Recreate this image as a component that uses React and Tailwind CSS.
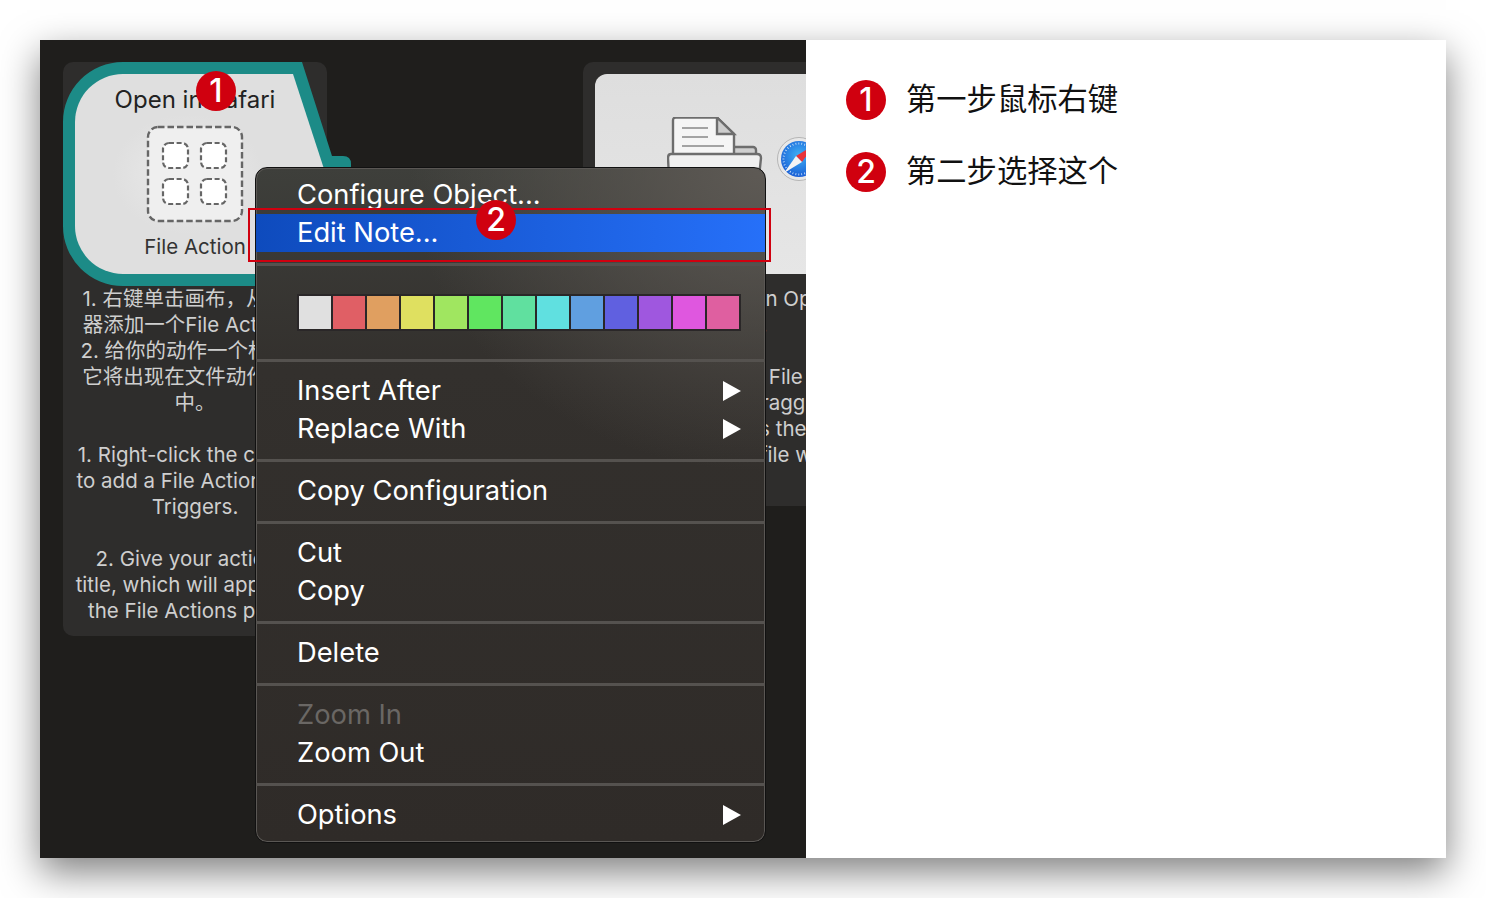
import React from "react";

const leftLines = [
  "1. 右键单击画布，从触发",
  "器添加一个File Action。",
  "2. 给你的动作一个标题，",
  "它将出现在文件动作面板",
  "中。",
  "\u00a0",
  "1. Right-click the canvas",
  "to add a File Action from",
  "Triggers.",
  "\u00a0",
  "2. Give your action a",
  "title, which will appear in",
  "the File Actions panel.",
];

const rightLines = [
  "Then select just an Open",
  "File action.",
  "\u00a0",
  "Connect it to the File to",
  "Test this out by dragging",
  "a file in. That is the",
  "an action's input file with",
  "it.",
];

const swatches = [
  "#e0e0e0", "#e05f65", "#e09f60", "#dfe060", "#a0e660", "#60e660", "#60e09f",
  "#60e0e0", "#609fe0", "#6060e0", "#9f57df", "#df57df", "#df5fa0",
];

const Badge = ({ n, className = "" }) => (
  <div
    className={`w-10 h-10 shrink-0 rounded-full bg-[#d0000f] text-white flex items-center justify-center text-[32px] font-medium font-['Inter',sans-serif] ${className}`}
  >
    {n}
  </div>
);

const Arrow = () => (
  <svg width="18" height="20" viewBox="0 0 18 20" className="shrink-0">
    <polygon points="0,0 18,10 0,20" fill="#fff" />
  </svg>
);

const Row = ({ label, arrow, disabled }) => (
  <div
    className={`h-[38px] pl-[41px] pr-6 flex items-center justify-between ${
      disabled ? "text-[#6a6764]" : "text-white"
    }`}
  >
    <span>{label}</span>
    {arrow && <Arrow />}
  </div>
);

const Sep = () => <div className="h-[3px] mt-[11px] mb-[10px] bg-[#55524f]" />;

const NodeShape = () => (
  <svg width="288" height="224" viewBox="0 0 288 224" className="absolute left-0 top-0">
    <defs>
      <radialGradient id="nodeFill" cx="0.45" cy="0.5" r="0.3">
        <stop offset="0" stopColor="#ebebeb" />
        <stop offset="1" stopColor="#dfdfdf" />
      </radialGradient>
    </defs>
    <path
      d="M60 0H239L269 94H280Q288 94 288 102V224H60A60 60 0 0 1 0 164V60A60 60 0 0 1 60 0Z"
      fill="#1c8b87"
    />
    <path
      d="M60 12H230L262 110V212H60A48 48 0 0 1 12 164V60A48 48 0 0 1 60 12Z"
      fill="url(#nodeFill)"
    />
  </svg>
);

const TriggerIcon = () => (
  <svg width="98" height="98" viewBox="0 0 98 98" className="mt-[10px]">
    <rect x="2" y="2" width="94" height="94" rx="10" fill="#efefef" stroke="#666" strokeWidth="2.4" strokeDasharray="6.5 3" />
    {[[17, 18], [55, 18], [17, 54], [55, 54]].map(([x, y]) => (
      <rect key={`${x}-${y}`} x={x} y={y} width="25" height="25" rx="6" fill="#fff" stroke="#666" strokeWidth="2.2" strokeDasharray="5 2.6" />
    ))}
  </svg>
);

const DocIcon = () => (
  <svg width="96" height="60" viewBox="0 0 96 60" className="shrink-0">
    <rect x="60" y="30" width="29" height="24" rx="3" fill="#cfcfcf" stroke="#6d6d6d" strokeWidth="2.4" />
    <path d="M9 0.5H50L67 17V50H6V3.5Q6 0.5 9 0.5Z" fill="#f5f5f5" stroke="#6d6d6d" strokeWidth="2.4" />
    <path d="M50 0.5L67 17H50Z" fill="#cdcdcd" stroke="#6d6d6d" strokeWidth="2.4" />
    <path d="M15 11H41M15 20H41M15 29H57" stroke="#a3a3a3" strokeWidth="2.2" />
    <path d="M4 37H90Q94 37 94 41L92 60H2L1 41Q1 37 4 37Z" fill="#f0f0f0" stroke="#6d6d6d" strokeWidth="2.4" />
  </svg>
);

const SafariIcon = () => (
  <svg width="44" height="44" viewBox="0 0 44 44" className="shrink-0 mt-[20px] ml-[14px]">
    <defs>
      <radialGradient id="safariBlue" cx="0.5" cy="0.4" r="0.6">
        <stop offset="0" stopColor="#3fb1f5" />
        <stop offset="1" stopColor="#1a5fd6" />
      </radialGradient>
    </defs>
    <circle cx="22" cy="22" r="21.5" fill="#e8e8e8" stroke="#b5b5b5" strokeWidth="1" />
    <circle cx="22" cy="22" r="18" fill="url(#safariBlue)" />
    <circle cx="22" cy="22" r="15.5" fill="none" stroke="#cfe6fb" strokeWidth="2" strokeDasharray="0.8 2.2" />
    <polygon points="37,8 25,25 19,19" fill="#e8343b" />
    <polygon points="7,36 19,19 25,25" fill="#f4f4f4" />
  </svg>
);

const Note = ({ lines }) => (
  <div className="text-[20.5px] leading-[26px] text-[#cfcfcf] text-center whitespace-nowrap">
    {lines.map((line, i) => (
      <div key={i}>{line}</div>
    ))}
  </div>
);

const App = () => {
  return (
    <div className="w-[1486px] h-[898px] bg-white p-10 overflow-hidden font-['Inter','Noto_Sans_CJK_SC',sans-serif]">
      <div className="w-[1406px] h-[818px] flex shadow-[0_14px_36px_rgba(0,0,0,0.5)]">
        {/* canvas */}
        <div className="relative w-[766px] h-full bg-[#1f1e1c] overflow-hidden">
          <div className="absolute left-[23px] top-[22px] w-[264px] rounded-[10px] bg-[#2e2d2c] pb-3">
            <div className="relative h-[224px]">
              <NodeShape />
              <div className="relative flex flex-col items-center w-[264px]">
                <div className="mt-[23px] text-[24px] leading-[30px] text-[#222]">Open in Safari</div>
                <TriggerIcon />
                <div className="mt-[11px] text-[20.5px] leading-[26px] text-[#333]">File Action</div>
              </div>
            </div>
            <Note lines={leftLines} />
          </div>

          <div className="absolute left-[543px] top-[22px] w-[264px] rounded-[10px] bg-[#2e2d2c] pb-3">
            <div className="p-3 pb-0">
              <div className="h-[200px] rounded-[12px] bg-linear-to-b from-[#dedede] to-[#e6e6e6] pt-[43px] pl-[72px] flex overflow-hidden">
                <DocIcon />
                <SafariIcon />
              </div>
              <div className="h-3" />
            </div>
            <Note lines={rightLines} />
          </div>

          {/* context menu */}
          <div className="absolute left-[215px] top-[127px] w-[511px] h-[676px] rounded-[12px] border border-[#111] overflow-hidden shadow-[inset_0_0_0_1px_#5a5754] bg-[radial-gradient(ellipse_70%_45%_at_100%_0%,#5e5a55_0%,rgba(94,90,85,0)_100%),linear-gradient(180deg,#3e3f3b_0%,#33302d_30%,#2f2b28_100%)] text-[27.3px] leading-[38px]">
            <div className="pt-2">
              <Row label="Configure Object..." />
              <div className="h-[38px] pl-[41px] flex items-center text-white bg-linear-to-r from-[#0e4bbd] to-[#2670f9]">
                Edit Note...
              </div>
            </div>
            <Sep />
            <div className="h-[37px] ml-[41px] mr-[24px] mt-[28px] mb-[28px] p-[2px] flex gap-[1.5px] bg-[#2a2728]">
              {swatches.map((c) => (
                <div key={c} className="flex-1" style={{ background: c }} />
              ))}
            </div>
            <Sep />
            <Row label="Insert After" arrow />
            <Row label="Replace With" arrow />
            <Sep />
            <Row label="Copy Configuration" />
            <Sep />
            <Row label="Cut" />
            <Row label="Copy" />
            <Sep />
            <Row label="Delete" />
            <Sep />
            <Row label="Zoom In" disabled />
            <Row label="Zoom Out" />
            <Sep />
            <Row label="Options" arrow />
          </div>

          {/* annotations */}
          <div className="absolute left-[208px] top-[168px] w-[523px] h-[54px] border-2 border-[#d0000f]" />
          <Badge n="1" className="absolute left-[156px] top-[31px]" />
          <Badge n="2" className="absolute left-[436px] top-[160px]" />
        </div>

        {/* steps */}
        <div className="w-[640px] h-full bg-white pl-10 pt-10 flex flex-col gap-8 text-[30.3px] leading-[40px] text-[#111] font-['Noto_Sans_CJK_SC',sans-serif]">
          <div className="flex items-center gap-5">
            <Badge n="1" />
            <span className="-mt-[7px]">第一步鼠标右键</span>
          </div>
          <div className="flex items-center gap-5">
            <Badge n="2" />
            <span className="-mt-[7px]">第二步选择这个</span>
          </div>
        </div>
      </div>
    </div>
  );
};

export default App;
